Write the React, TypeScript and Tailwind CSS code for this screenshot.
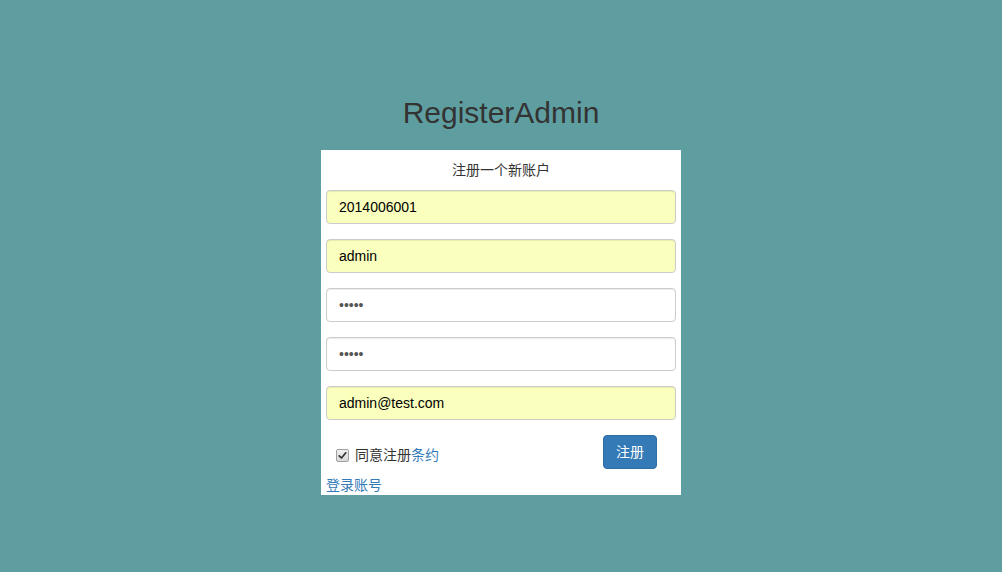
import React from 'react';

const FONT = '"Liberation Sans", "Noto Sans CJK SC", Arial, sans-serif';

type Field = {
	value: string;
	filled: boolean;
	secret?: boolean;
};

const FIELDS: Field[] = [
	{ value: '2014006001', filled: true },
	{ value: 'admin', filled: true },
	{ value: '•••••', filled: false, secret: true },
	{ value: '•••••', filled: false, secret: true },
	{ value: 'admin@test.com', filled: true },
];

function FormInput({ field }: { field: Field }) {
	return (
		<input
			type="text"
			readOnly
			value={field.value}
			className={`mb-[15px] block h-[34px] w-full rounded-[4px] border border-[#ccc] px-[12px] text-[14px] outline-none shadow-[inset_0_1px_1px_rgba(0,0,0,0.075)] ${
				field.filled ? 'bg-[#faffbd] text-[#000]' : 'bg-white text-[#555]'
			} ${field.secret ? 'tracking-[0px]' : ''}`}
			style={{ fontFamily: FONT }}
		/>
	);
}

function CheckMark() {
	return (
		<span className="flex h-[13px] w-[13px] items-center justify-center rounded-[2px] border border-[#a0a0a0] bg-gradient-to-b from-[#f0f0f0] to-[#d8d8d8]">
			<svg width="9" height="9" viewBox="0 0 9 9" fill="none">
				<path d="M1.2 4.8 L3.5 7 L7.8 1.8" stroke="#333" strokeWidth="1.7" strokeLinecap="round" strokeLinejoin="round" />
			</svg>
		</span>
	);
}

export default function App() {
	return (
		<div className="min-h-[572px] w-full bg-[#5f9ea0] pt-[96px]" style={{ fontFamily: FONT }}>
			<h1 className="text-center text-[30px] leading-[33px] font-normal text-[#333]">RegisterAdmin</h1>

			<div className="mx-auto mt-[21px] w-[360px] bg-white px-[5px] pt-[10px]">
				<p className="mb-[10px] text-center text-[14px] leading-[20px] text-[#333]">注册一个新账户</p>

				<form>
					{FIELDS.map((field, i) => (
						<FormInput key={i} field={field} />
					))}

					<div className="flex items-start justify-between">
						<label className="mt-[10px] flex h-[20px] items-center pl-[10px] text-[14px] text-[#333]">
							<CheckMark />
							<span className="ml-[6px]">
								同意注册<a className="text-[#337ab7]">条约</a>
							</span>
						</label>
						<button
							type="button"
							className="mr-[19px] h-[34px] w-[54px] rounded-[4px] border border-[#2e6da4] bg-[#337ab7] text-[14px] text-white"
						>
							注册
						</button>
					</div>
				</form>

				<a className="block pt-[6px] text-[14px] leading-[20px] text-[#337ab7]">登录账号</a>
			</div>
		</div>
	);
}
